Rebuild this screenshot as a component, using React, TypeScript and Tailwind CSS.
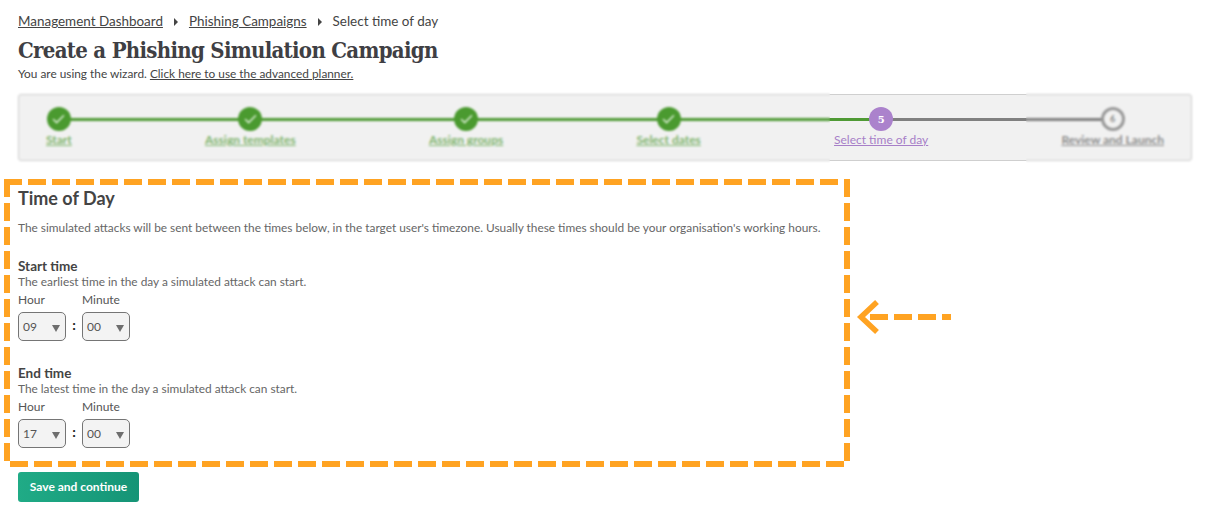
import React from 'react';
import { Check } from 'lucide-react';

const steps = [
  { label: 'Start', state: 'done' },
  { label: 'Assign templates', state: 'done' },
  { label: 'Assign groups', state: 'done' },
  { label: 'Select dates', state: 'done' },
  { label: 'Select time of day', state: 'current', num: 5 },
  { label: 'Review and Launch', state: 'todo', num: 6 },
];

const Stepper: React.FC = () => (
  <div className="relative mt-[13px] h-[67px] w-[1174px]">
    <div className="relative flex h-full justify-between rounded-[3px] border border-[#cfcfcf] bg-[#f1f1f1] px-[27px] pt-[12px]">
      {/* Connectors */}
      <div className="absolute left-[40px] top-[23px] h-[3px] w-[822px] bg-[#4f9a35]" />
      <div className="absolute left-[862px] top-[23px] h-[3px] w-[230px] bg-[#808080]" />
      {steps.map(step => (
        <div key={step.label} className="relative flex flex-col items-center">
          {step.state === 'done' && (
            <div className="flex h-6 w-6 items-center justify-center rounded-full bg-[#4a9a2f]">
              <Check size={15} strokeWidth={2.5} className="text-[#d6ebcf]" />
            </div>
          )}
          {step.state === 'current' && (
            <div className="flex h-6 w-6 items-center justify-center rounded-full bg-[#ab82cc] font-['DejaVu_Serif',serif] text-[10px] font-bold text-white">
              {step.num}
            </div>
          )}
          {step.state === 'todo' && (
            <div className="flex h-6 w-6 items-center justify-center rounded-full border-[3px] border-[#9a9a9a] bg-[#f1f1f1] text-[9px] font-bold text-[#888]">
              {step.num}
            </div>
          )}
          <a
            className={`mt-[1px] whitespace-nowrap text-xs leading-[16px] underline ${
              step.state === 'done'
                ? 'font-bold text-[#7fb46d]'
                : step.state === 'current'
                  ? 'text-[#a77fc8]'
                  : 'font-bold text-[#8d8d8d]'
            }`}
          >
            {step.label}
          </a>
        </div>
      ))}
    </div>
    {/* The screenshot has the finished and upcoming steps blurred out */}
    <div className="absolute left-[-2px] top-[-2px] h-[71px] w-[814px] backdrop-blur-[1px]" />
    <div className="absolute left-[1008px] top-[-2px] h-[71px] w-[168px] backdrop-blur-[1px]" />
  </div>
);

const TimeSelect: React.FC<{ value: string }> = ({ value }) => (
  <div className="relative h-[29px] w-12 rounded-[5px] border border-[#757575] bg-[#f3f3f3]">
    <span className="absolute left-[4px] top-[6px] text-xs leading-[16px] text-[#555]">{value}</span>
    <span className="absolute right-[5px] top-[12px] h-0 w-0 border-x-[4px] border-t-[7px] border-x-transparent border-t-[#6e6e6e]" />
  </div>
);

const TimeGroup: React.FC<{ title: string; hint: string; hour: string; minute: string }> = ({ title, hint, hour, minute }) => (
  <div>
    <h3 className="text-[13.5px] font-bold leading-[16px] text-[#444]">{title}</h3>
    <p className="text-[11.87px] leading-[15px] text-[#666]">{hint}</p>
    <div className="mt-[3px] flex text-xs leading-[15px] text-[#555]">
      <span className="w-16">Hour</span>
      <span>Minute</span>
    </div>
    <div className="mt-[5px] flex items-center">
      <TimeSelect value={hour} />
      <span className="w-4 pb-[3px] text-center text-sm font-bold leading-none text-[#222]">:</span>
      <TimeSelect value={minute} />
    </div>
  </div>
);

export default function App() {
  return (
    <div className="relative h-[519px] w-[1218px] overflow-hidden bg-white pl-[18px] pt-[13px] font-['Lato',sans-serif] text-[#444]">
      <nav className="flex items-center text-[13.45px] leading-[17px] text-[#444]">
        <a className="underline">Management Dashboard</a>
        <span className="mx-[11px] h-0 w-0 border-y-[4px] border-l-[4px] border-y-transparent border-l-[#444]" />
        <a className="underline">Phishing Campaigns</a>
        <span className="mx-[11px] h-0 w-0 border-y-[4px] border-l-[4px] border-y-transparent border-l-[#444]" />
        <span>Select time of day</span>
      </nav>
      <h1 className="mt-[5px] font-['DejaVu_Serif_Condensed','DejaVu_Serif',serif] text-[22px] font-bold leading-[30px] tracking-[-0.7px] text-[#3f3f44]">
        Create a Phishing Simulation Campaign
      </h1>
      <p className="mt-[1px] text-[11.85px] leading-[15px] text-[#444]">
        You are using the wizard. <a className="underline">Click here to use the advanced planner.</a>
      </p>

      <Stepper />

      <section className="mt-[26px]">
        <h2 className="text-lg font-bold leading-[22px] text-[#444]">Time of Day</h2>
        <p className="mt-[11px] text-[11.87px] leading-[16px] text-[#666]">
          The simulated attacks will be sent between the times below, in the target user's timezone. Usually these times should be your organisation's working hours.
        </p>
        <div className="mt-[22px] flex flex-col gap-6">
          <TimeGroup title="Start time" hint="The earliest time in the day a simulated attack can start." hour="09" minute="00" />
          <TimeGroup title="End time" hint="The latest time in the day a simulated attack can start." hour="17" minute="00" />
        </div>
      </section>

      <button className="mt-[24px] h-[30px] w-[121px] rounded-[3px] bg-gradient-to-r from-[#20ab86] to-[#159476] text-xs font-bold text-white">
        Save and continue
      </button>

      {/* Annotation drawn over the page */}
      <svg className="pointer-events-none absolute left-0 top-0" width="1218" height="519" fill="none" stroke="#ffa322" strokeWidth="6" strokeDasharray="18 6">
        <path d="M4 182H838" />
        <path d="M847 179V461" />
        <path d="M10 464H844" />
        <path d="M7 179V461" />
        <path d="M870 317H951" />
        <path d="M877 302L861 317L877 332" strokeWidth="5.5" strokeDasharray="none" />
      </svg>
    </div>
  );
}
